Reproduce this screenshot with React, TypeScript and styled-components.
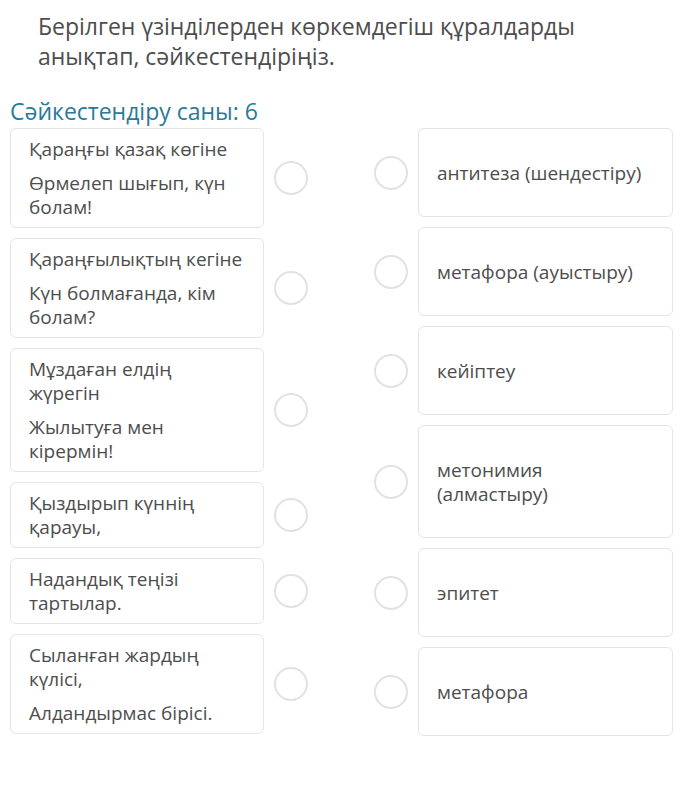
import React from "react";
import styled, { createGlobalStyle } from "styled-components";

const Global = createGlobalStyle`
  html, body { margin: 0; padding: 0; background: #ffffff; }
  body { font-family: "Open Sans", "Noto Sans", sans-serif; color: #4a4a4a; }
`;

const Page = styled.div`
  padding: 11px 15px 40px 10px;
  width: 688px;
  box-sizing: border-box;
`;

const Title = styled.h1`
  margin: 0 0 26px 28px;
  font-size: 23px;
  line-height: 30px;
  font-weight: 400;
  color: #4d4d4d;
  max-width: 580px;
`;

const Count = styled.div`
  font-size: 23px;
  line-height: 28px;
  color: #2a7a98;
  margin-bottom: 3px;
`;

const Columns = styled.div`
  display: flex;
  justify-content: space-between;
`;

const Column = styled.div`
  display: flex;
  flex-direction: column;
  gap: 10px;
`;

const Row = styled.div`
  display: flex;
  align-items: center;
  gap: 10px;
`;

const Card = styled.div<{ $wide?: boolean }>`
  box-sizing: border-box;
  width: ${(p) => (p.$wide ? "255px" : "254px")};
  border: 1px solid #e4e4e4;
  border-radius: 6px;
  background: #fff;
  font-size: 19px;
  line-height: 24px;
  color: #4d4d4d;
`;

const LeftCard = styled(Card)`
  padding: 8px 18px 8px 18px;
  display: flex;
  flex-direction: column;
  gap: 10px;
`;

const RightCard = styled(Card)`
  padding: 31.5px 18px 31.5px 18px;
`;

const Para = styled.div``;

const Circle = styled.div`
  width: 34px;
  height: 34px;
  box-sizing: border-box;
  border-radius: 50%;
  border: 2px solid #e2e2e2;
  flex-shrink: 0;
`;

const left: string[][] = [
  ["Қараңғы қазақ көгіне", "Өрмелеп шығып, күн болам!"],
  ["Қараңғылықтың кегіне", "Күн болмағанда, кім болам?"],
  ["Мұздаған елдің жүрегін", "Жылытуға мен кірермін!"],
  ["Қыздырып күннің қарауы,"],
  ["Надандық теңізі тартылар."],
  ["Сыланған жардың күлісі,", "Алдандырмас бірісі."],
];

const right: string[] = [
  "антитеза (шендестіру)",
  "метафора (ауыстыру)",
  "кейіптеу",
  "метонимия (алмастыру)",
  "эпитет",
  "метафора",
];

export default function App() {
  return (
    <Page>
      <Global />
      <Title>Берілген үзінділерден көркемдегіш құралдарды анықтап, сәйкестендіріңіз.</Title>
      <Count>Сәйкестендіру саны: 6</Count>
      <Columns>
        <Column>
          {left.map((paras, i) => (
            <Row key={i}>
              <LeftCard>
                {paras.map((p, j) => (
                  <Para key={j}>{p}</Para>
                ))}
              </LeftCard>
              <Circle />
            </Row>
          ))}
        </Column>
        <Column>
          {right.map((t, i) => (
            <Row key={i}>
              <Circle />
              <RightCard $wide>{t}</RightCard>
            </Row>
          ))}
        </Column>
      </Columns>
    </Page>
  );
}
